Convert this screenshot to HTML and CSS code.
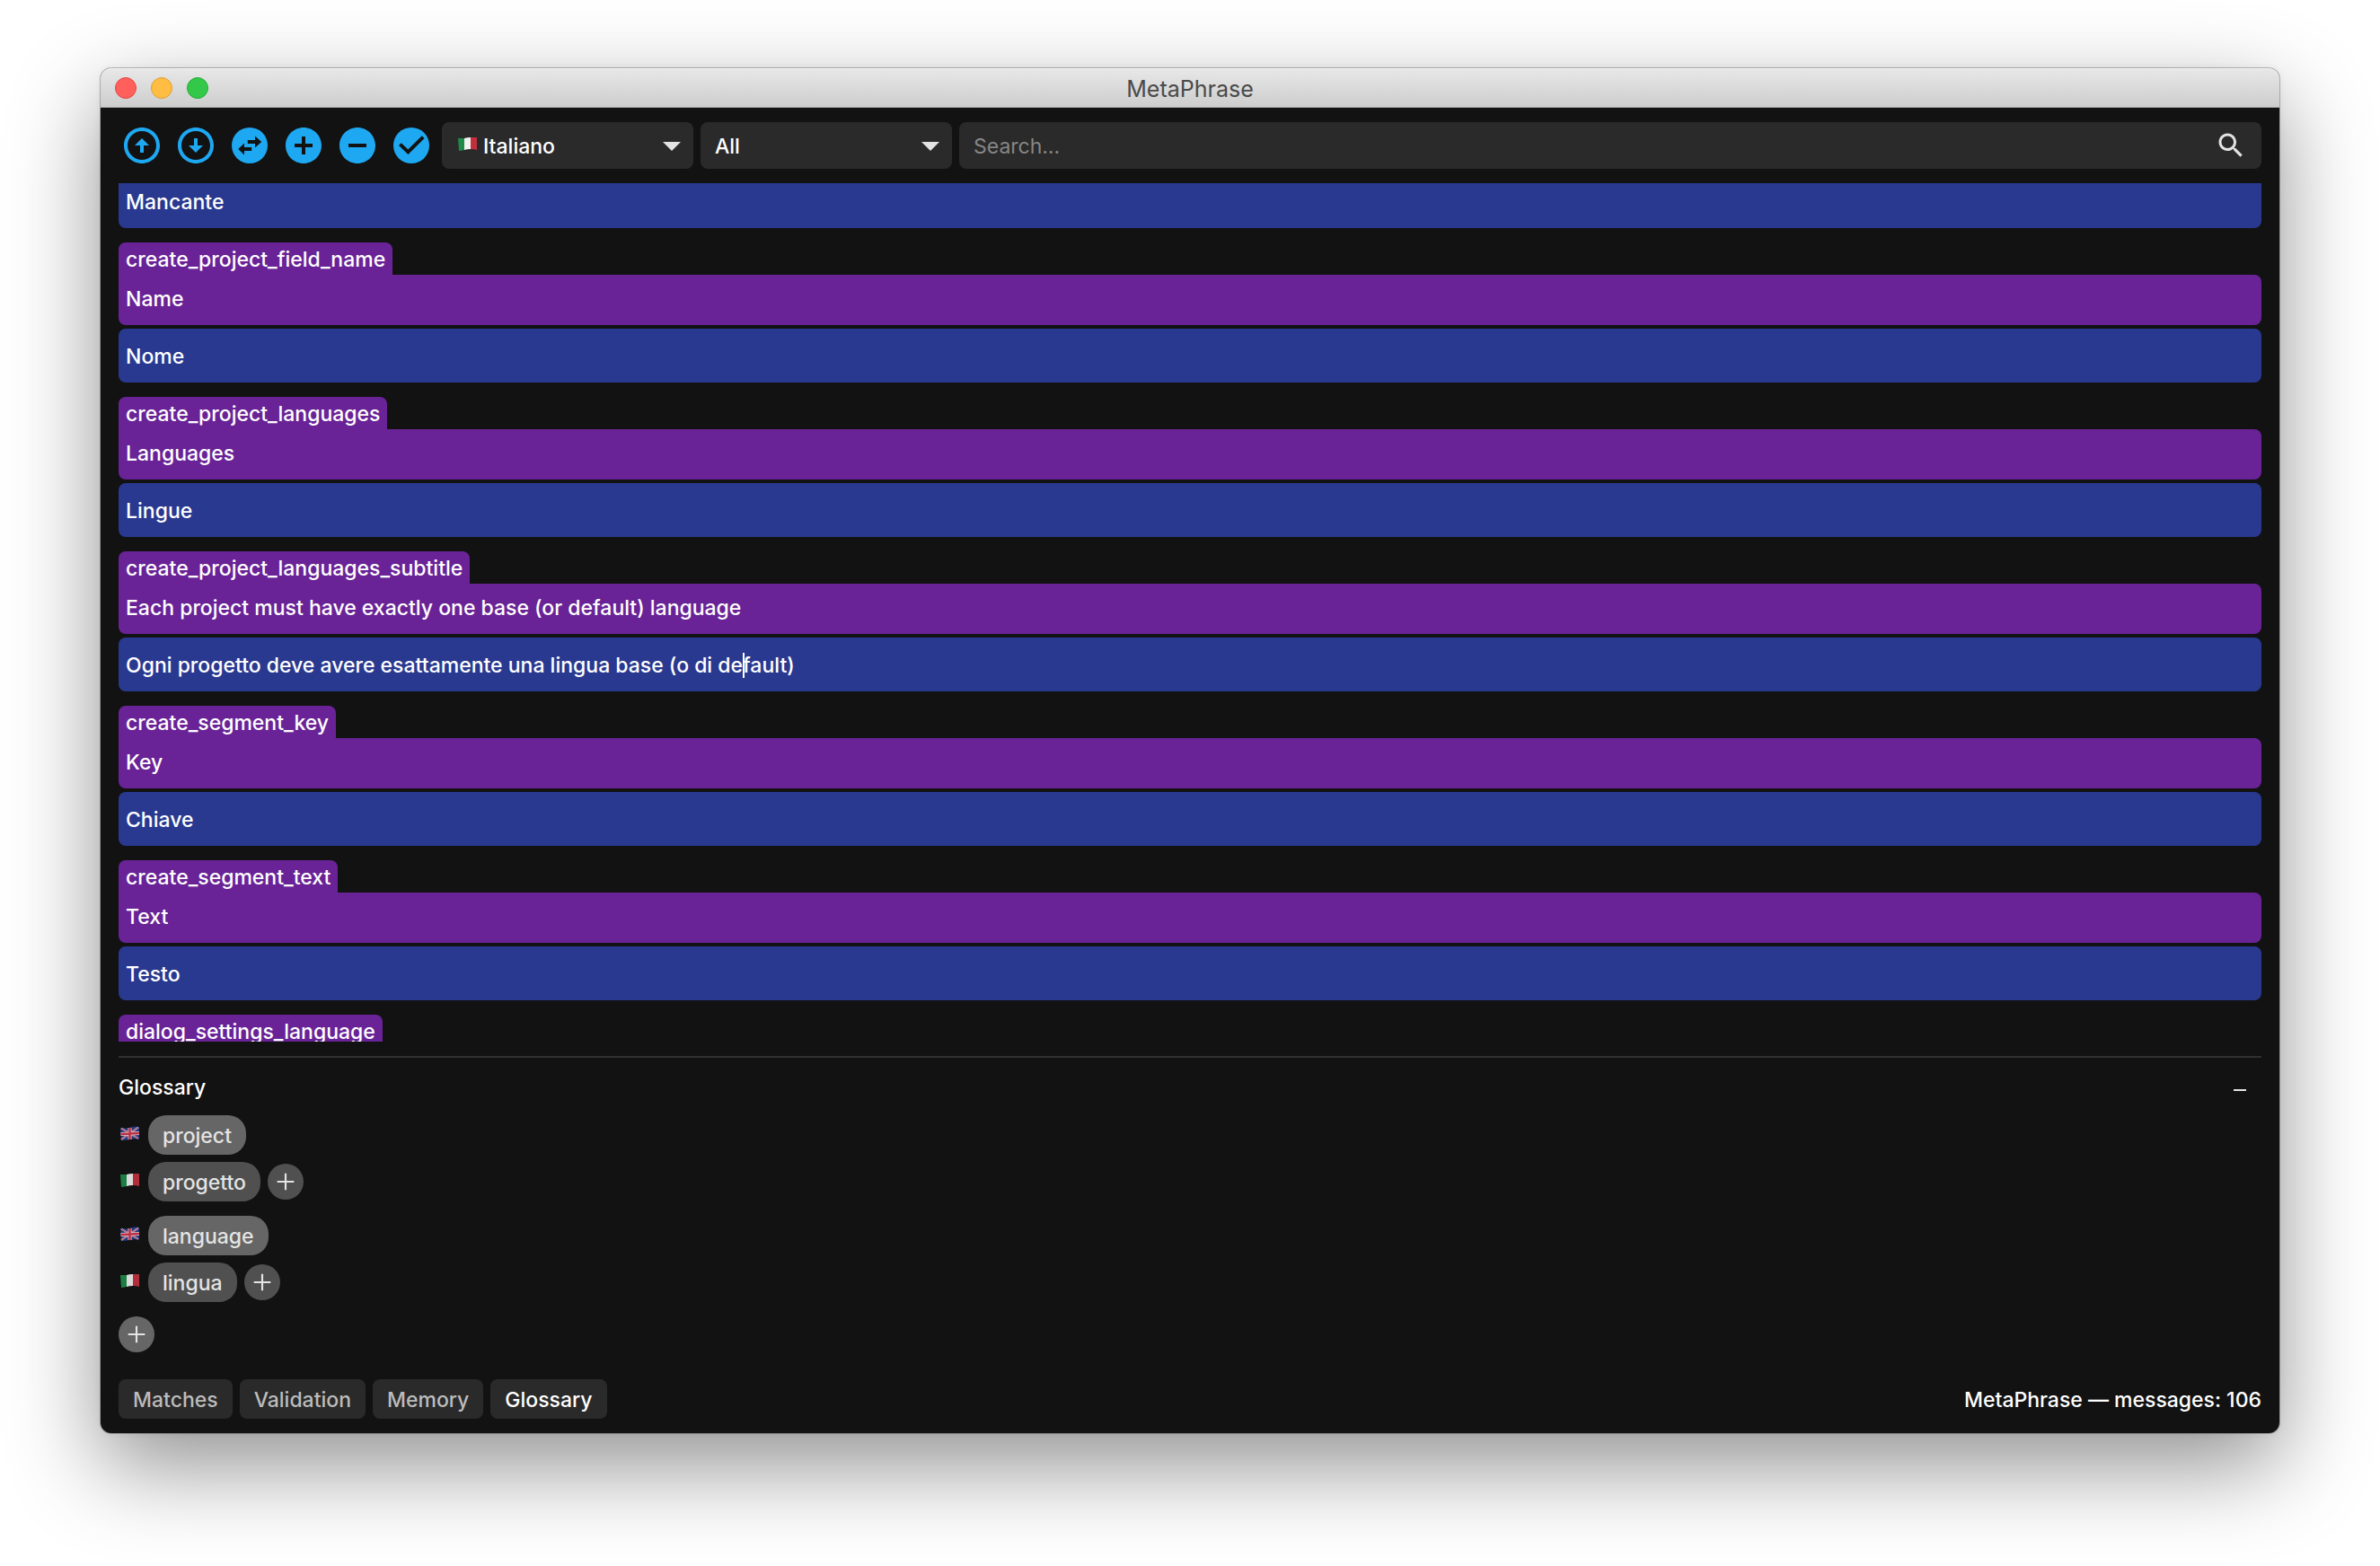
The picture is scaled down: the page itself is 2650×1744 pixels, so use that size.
FILE: index.html
```html
<!DOCTYPE html>
<html lang="en">
<head>
<meta charset="utf-8">
<title>MetaPhrase</title>
<link rel="stylesheet" href="styles.css">
</head>
<body>
<svg class="sprite" aria-hidden="true">
  <symbol id="flag-it" viewBox="0 0 25 24">
    <path fill="#1f8a4a" d="M2 4Q5 4 9 4V17Q5 18 3 18Z"/>
    <path fill="#f2f2f2" d="M9 4Q12 3 16 3V16Q12 16 9 17Z"/>
    <path fill="#c2303e" d="M16 3Q20 3 23 3V17Q20 16 16 16Z"/>
  </symbol>
  <symbol id="flag-uk" viewBox="0 0 25 24">
    <path fill="#1f3f8c" d="M2 4Q9 5 13 3.500T23 3V16.500Q17 16 13 17T3 18Z"/>
    <path stroke="#f0e6e8" stroke-width="2" d="M3 4.500L22 16M3 17L22 3.500"/>
    <path stroke="#d0304a" stroke-width="1" d="M3 4.500L22 16M3 17L22 3.500"/>
    <path stroke="#f0e6e8" stroke-width="4" d="M12.500 4V17M2.500 11L23 10"/>
    <path stroke="#d0304a" stroke-width="2.500" d="M12.500 4V17M2.500 11L23 10"/>
  </symbol>
  <symbol id="caret" viewBox="0 0 24 24"><path fill="currentColor" d="M7 10l5 5 5-5z"/></symbol>
  <symbol id="plus" viewBox="0 0 24 24"><path fill="none" stroke="currentColor" stroke-width="1.600" d="M12 5v14M5 12h14"/></symbol>
</svg>

<main class="window">
  <header class="titlebar">
    <div class="lights">
      <button class="light light-close" aria-label="Close"></button>
      <button class="light light-minimize" aria-label="Minimize"></button>
      <button class="light light-zoom" aria-label="Zoom"></button>
    </div>
    <h1 class="title">MetaPhrase</h1>
  </header>

  <div class="content">
    <div class="toolbar">
      <div class="actions">
        <button class="action" aria-label="Previous"><svg viewBox="0 0 24 24"><path d="M12 20c-4.410 0-8-3.590-8-8s3.590-8 8-8 8 3.590 8 8-3.590 8-8 8m0 2c5.520 0 10-4.480 10-10S17.520 2 12 2 2 6.480 2 12s4.480 10 10 10zm-1-10v4h2v-4h3l-4-4-4 4h3z"/></svg></button>
        <button class="action" aria-label="Next"><svg viewBox="0 0 24 24"><path d="M12 4c4.410 0 8 3.590 8 8s-3.590 8-8 8-8-3.590-8-8 3.590-8 8-8m0-2C6.480 2 2 6.480 2 12s4.480 10 10 10 10-4.480 10-10S17.520 2 12 2zm1 10V8h-2v4H8l4 4 4-4h-3z"/></svg></button>
        <button class="action" aria-label="Copy base"><svg viewBox="0 0 24 24"><circle cx="12" cy="12" r="10"/><path class="cut" d="M10.900 9H15V6.700L18.600 10 15 13.300V11H10.900zM13.100 13H9V10.700L5.600 14 9 17.300V15H13.100z"/></svg></button>
        <button class="action" aria-label="Add"><svg viewBox="0 0 24 24"><path d="M12 2C6.480 2 2 6.480 2 12s4.480 10 10 10 10-4.480 10-10S17.520 2 12 2zm5 11h-4v4h-2v-4H7v-2h4V7h2v4h4v2z"/></svg></button>
        <button class="action" aria-label="Remove"><svg viewBox="0 0 24 24"><path d="M12 2C6.480 2 2 6.480 2 12s4.480 10 10 10 10-4.480 10-10S17.520 2 12 2zm5 11H7v-2h10v2z"/></svg></button>
        <button class="action" aria-label="Validate"><svg viewBox="0 0 24 24"><circle cx="12" cy="12" r="10"/><path class="cut-line" d="M5.700 11.300L10.200 15.600 18.600 7.300"/></svg></button>
      </div>
      <div class="filters">
        <div class="picker picker-flag">
          <svg class="flag"><use href="#flag-it"/></svg>
          <select aria-label="Language"><option>Italiano</option></select>
          <svg class="caret"><use href="#caret"/></svg>
        </div>
        <div class="picker">
          <select aria-label="Filter"><option>All</option></select>
          <svg class="caret"><use href="#caret"/></svg>
        </div>
        <div class="search">
          <input type="text" placeholder="Search…" aria-label="Search">
          <button class="search-button" aria-label="Start search"><svg viewBox="0 0 24 24"><path d="M15.500 14h-.790l-.280-.270C15.410 12.590 16 11.110 16 9.500 16 5.910 13.090 3 9.500 3S3 5.910 3 9.500 5.910 16 9.500 16c1.610 0 3.090-.590 4.230-1.570l.270.280v.790l5 4.990L20.490 19l-4.990-5zm-6 0C7.010 14 5 11.990 5 9.500S7.010 5 9.500 5 14 7.010 14 9.500 11.990 14 9.500 14z"/></svg></button>
        </div>
      </div>
    </div>

    <div class="segments" id="segments">
      <section class="segment">
        <p class="target">Mancante</p>
      </section>
      <section class="segment">
        <h2 class="key">create_project_field_name</h2>
        <p class="source">Name</p>
        <p class="target">Nome</p>
      </section>
      <section class="segment">
        <h2 class="key">create_project_languages</h2>
        <p class="source">Languages</p>
        <p class="target">Lingue</p>
      </section>
      <section class="segment">
        <h2 class="key">create_project_languages_subtitle</h2>
        <p class="source">Each project must have exactly one base (or default) language</p>
        <p class="target">Ogni progetto deve avere esattamente una lingua base (o di de<span class="cursor"></span>fault)</p>
      </section>
      <section class="segment">
        <h2 class="key">create_segment_key</h2>
        <p class="source">Key</p>
        <p class="target">Chiave</p>
      </section>
      <section class="segment">
        <h2 class="key">create_segment_text</h2>
        <p class="source">Text</p>
        <p class="target">Testo</p>
      </section>
      <section class="segment">
        <h2 class="key">dialog_settings_language</h2>
      </section>
    </div>

    <section class="panel">
      <div class="panel-head">
        <h2 class="panel-title">Glossary</h2>
        <button class="collapse" aria-label="Collapse"><svg viewBox="0 0 24 24"><path d="M19 13H5v-2h14v2z"/></svg></button>
      </div>
      <div class="terms">
        <div class="term">
          <div class="term-row"><svg class="flag"><use href="#flag-uk"/></svg><span class="chip chip-base">project</span></div>
          <div class="term-row"><svg class="flag"><use href="#flag-it"/></svg><span class="chip">progetto</span><button class="add" aria-label="Add translation"><svg><use href="#plus"/></svg></button></div>
        </div>
        <div class="term">
          <div class="term-row"><svg class="flag"><use href="#flag-uk"/></svg><span class="chip chip-base">language</span></div>
          <div class="term-row"><svg class="flag"><use href="#flag-it"/></svg><span class="chip">lingua</span><button class="add" aria-label="Add translation"><svg><use href="#plus"/></svg></button></div>
        </div>
        <button class="add add-term" aria-label="Add term"><svg><use href="#plus"/></svg></button>
      </div>
    </section>

    <footer class="footer">
      <nav class="tabs">
        <button class="tab">Matches</button>
        <button class="tab">Validation</button>
        <button class="tab">Memory</button>
        <button class="tab tab-active">Glossary</button>
      </nav>
      <p class="status">MetaPhrase — messages: 106</p>
    </footer>
  </div>
</main>
<script src="main.js"></script>
</body>
</html>
```
FILE: styles.css
```css
* {
  box-sizing: border-box;
}

body {
  margin: 0;
  min-height: 100vh;
  display: flex;
  padding: 76px 112px 148px;
  background: #fff;
  color: #fff;
  font: 500 23px/28px Inter, "Liberation Sans", sans-serif;
}

h1, h2, p {
  margin: 0;
  font: inherit;
}

button, input, select {
  margin: 0;
  padding: 0;
  border: 0;
  background: none;
  color: inherit;
  font: inherit;
}

svg {
  display: block;
  flex: none;
  fill: currentColor;
}

.sprite {
  position: absolute;
  width: 0;
  height: 0;
}

.window {
  flex: 1;
  min-width: 0;
  display: flex;
  flex-direction: column;
  border-radius: 12px;
  background: #121212;
  box-shadow: 0 0 0 1px rgba(0, 0, 0, 0.25), 0 36px 100px rgba(0, 0, 0, 0.44), 0 0 8px rgba(0, 0, 0, 0.06);
}

.titlebar {
  display: grid;
  grid-template-columns: 1fr auto 1fr;
  align-items: center;
  height: 44px;
  padding: 0 16px;
  border-bottom: 1px solid #aaa;
  border-radius: 12px 12px 0 0;
  background: linear-gradient(#e8e8e8, #cdcdcd);
  box-shadow: inset 0 1px #f4f4f4;
}

.lights {
  display: flex;
  gap: 16px;
}

.light {
  width: 24px;
  height: 24px;
  border: 1px solid;
  border-radius: 50%;
}

.light-close {
  border-color: #e2463f;
  background: #ff605c;
}

.light-minimize {
  border-color: #e0a02f;
  background: #ffbd44;
}

.light-zoom {
  border-color: #1fae34;
  background: #34c84a;
}

.title {
  padding-top: 2px;
  color: #4a4a4a;
  font-size: 25px;
  font-weight: 400;
}

.content {
  flex: 1;
  min-height: 0;
  display: flex;
  flex-direction: column;
  padding: 16px 20px;
}

.toolbar {
  display: flex;
  gap: 10px;
  align-items: center;
}

.actions {
  display: flex;
  gap: 12px;
  padding-left: 2px;
  color: #1ea8f2;
}

.action,
.action svg {
  width: 48px;
  height: 48px;
}

.cut {
  fill: #121212;
}

.cut-line {
  fill: none;
  stroke: #121212;
  stroke-width: 2;
}

.filters {
  flex: 1;
  display: flex;
  gap: 8px;
}

.picker,
.search {
  display: flex;
  align-items: center;
  height: 52px;
  border-radius: 8px;
  background: #2a2a2a;
}

.picker {
  width: 280px;
  padding-left: 16px;
}

.picker-flag {
  gap: 5px;
}

.picker select {
  flex: 1;
  min-width: 0;
  padding-top: 1px;
  appearance: none;
}

.caret {
  width: 48px;
  height: 48px;
  color: #e3e3e3;
}

.flag {
  width: 25px;
  height: 24px;
}

.search {
  flex: 1;
  padding: 0 16px;
}

.search input {
  flex: 1;
  min-width: 0;
  padding-top: 2px;
  font-weight: 400;
}

.search input::placeholder {
  color: #868686;
}

.search-button,
.search-button svg {
  width: 36px;
  height: 36px;
  color: #e3e3e3;
}

.segments {
  flex: 1 1 0;
  min-height: 0;
  display: flex;
  flex-direction: column;
  gap: 16px;
  margin: 16px 0;
  padding-bottom: 16px;
  overflow-y: auto;
  scrollbar-width: none;
}

.segment {
  flex: none;
  display: flex;
  flex-direction: column;
}

.key {
  align-self: flex-start;
  padding: 5px 8px 3px;
  border-radius: 8px 8px 0 0;
  background: #692397;
}

.source {
  padding: 13px 8px 15px;
  border-radius: 0 8px 8px 8px;
  background: #692397;
}

.target {
  padding: 17px 8px 15px;
  border-radius: 8px;
  background: #293990;
}

.source + .target {
  margin-top: 4px;
}

.cursor {
  display: inline-block;
  width: 2px;
  height: 28px;
  margin-right: -2px;
  vertical-align: bottom;
  background: #fff;
}

.panel {
  border-top: 2px solid #303030;
  padding-top: 18px;
}

.panel-head {
  display: flex;
  justify-content: space-between;
  height: 30px;
  padding-right: 12px;
}

.panel-title {
  padding-top: 1px;
}

.collapse {
  align-self: flex-end;
  color: #e3e3e3;
}

.collapse svg {
  width: 24px;
  height: 24px;
}

.add svg {
  width: 32px;
  height: 32px;
}

.terms {
  display: flex;
  flex-direction: column;
  gap: 16px;
  padding: 16px 0 30px;
  color: #e4e4e4;
}

.term {
  display: flex;
  flex-direction: column;
  gap: 8px;
}

.term-row {
  display: flex;
  align-items: center;
  gap: 8px;
}

.term-row .flag {
  opacity: 0.9;
}

.chip {
  padding: 9px 16px 7px;
  border-radius: 20px;
  background: #505050;
}

.chip-base {
  background: #666;
}

.add {
  display: flex;
  align-items: center;
  justify-content: center;
  width: 40px;
  height: 40px;
  border-radius: 50%;
  background: #505050;
}

.add-term {
  background: #666;
}

.footer {
  display: flex;
  align-items: center;
  justify-content: space-between;
}

.tabs {
  display: flex;
  gap: 8px;
}

.tab {
  padding: 9px 16px 7px;
  border-radius: 8px;
  background: #2a2a2a;
  color: #bcbcbc;
}

.tab-active {
  color: #fff;
}

.status {
  padding-top: 2px;
}
```
FILE: main.js
```js
document.getElementById("segments").scrollTop = 10;
```
